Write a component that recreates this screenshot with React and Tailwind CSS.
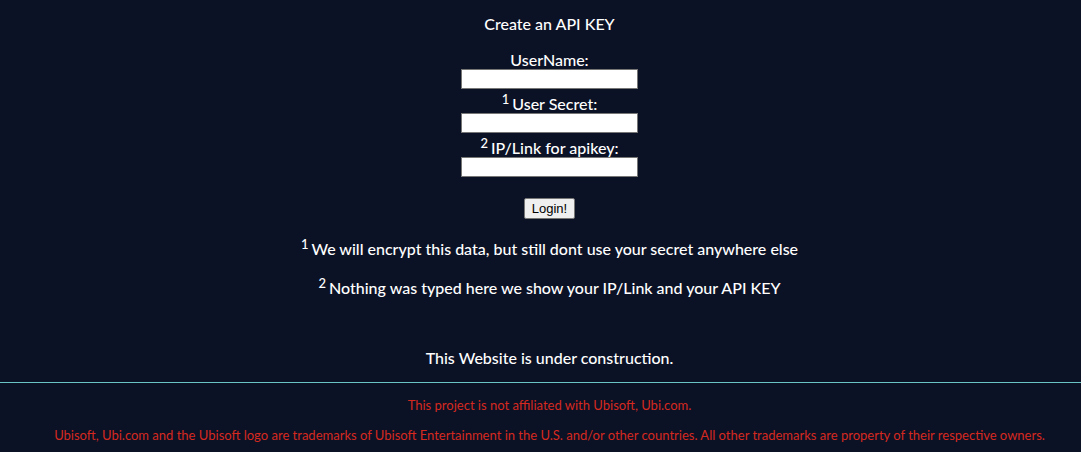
import React from 'react';

const Field = ({ note, label }) => (
    <>
        <label className="block leading-[19px] mt-[5px]">
            {note && <sup className="text-[13px] mr-[3px]">{note}</sup>}
            {label}
        </label>
        <input type="text" className="block mx-auto w-[177px] h-[20px] bg-white border border-[#767676] text-black" />
    </>
);

const App = () => {
    return (
        <div className="min-h-[452px] pl-[18px] bg-[#0c1226] text-white font-['Lato',sans-serif] text-center text-[16px]">
            {/* Form */}
            <section className="pt-[12px]">
                <h1 className="leading-[24px] font-medium">Create an API KEY</h1>
                <form className="mt-[14px] font-medium">
                    <Field label="UserName:" />
                    <Field note="1" label="User Secret:" />
                    <Field note="2" label="IP/Link for apikey:" />
                    <button
                        type="button"
                        className="mt-[21px] h-[21px] px-[7px] bg-[#efefef] border border-[#767676] rounded-[2px] text-black text-[13px] font-['Liberation_Sans',sans-serif] font-normal leading-[16px]"
                    >
                        Login!
                    </button>
                </form>
            </section>

            {/* Notes */}
            <section className="mt-[20px] font-medium">
                <p className="leading-[20px]"><sup className="text-[13px] mr-[3px]">1</sup>We will encrypt this data, but still dont use your secret anywhere else</p>
                <p className="leading-[20px] mt-[19px]"><sup className="text-[13px] mr-[3px]">2</sup>Nothing was typed here we show your IP/Link and your API KEY</p>
                <p className="leading-[20px] mt-[50px]">This Website is under construction.</p>
            </section>

            {/* Footer */}
            <footer className="mt-[14px] -ml-[18px] border-t border-[#6cc3c6] text-[#d5291f] text-[13px] leading-[18px]">
                <p className="pl-[18px] pt-[13px]">This project is not affiliated with Ubisoft, Ubi.com.</p>
                <p className="pl-[18px] mt-[12px]">Ubisoft, Ubi.com and the Ubisoft logo are trademarks of Ubisoft Entertainment in the U.S. and/or other countries. All other trademarks are property of their respective owners.</p>
            </footer>
        </div>
    );
};

export default App;
